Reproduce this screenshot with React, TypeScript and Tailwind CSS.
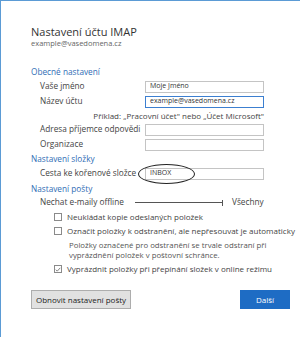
import React from "react";

const font = { fontFamily: '"Open Sans", "Noto Sans", sans-serif' };

function Field({ label, value, focused, children }: { label: string; value?: string; focused?: boolean; children?: React.ReactNode }) {
  return (
    <div className="flex items-center h-[15px] pl-[39px]">
      <span className="w-[105px] text-[8.25px] text-[#444] whitespace-nowrap">{label}</span>
      <div
        className={
          focused
            ? "relative w-[119px] h-[12px] border border-[#3c7fd0] bg-white flex items-center pl-[4px] text-[7px] text-[#333]"
            : "relative w-[119px] h-[12px] border border-[#c4c4c4] bg-white flex items-center pl-[4px] text-[7px] text-[#333]"
        }
      >
        {value}
        {children}
      </div>
    </div>
  );
}

function Check({ label, checked }: { label: string; checked?: boolean }) {
  return (
    <div className="flex items-center h-[14px] pl-[53px]">
      <div className="w-[8px] h-[8px] shrink-0 border border-[#8a8a8a] bg-white flex items-center justify-center">
        {checked && (
          <svg width="7" height="7" viewBox="0 0 8 8">
            <path d="M1 4.2 L3 6.2 L7 1.8" fill="none" stroke="#444" strokeWidth="0.9" />
          </svg>
        )}
      </div>
      <span className="ml-[5px] text-[8px] text-[#444] whitespace-nowrap">{label}</span>
    </div>
  );
}

export default function App() {
  return (
    <div style={font} className="w-[300px] h-[337px] bg-white border-l border-t border-[#5b9bd5] flex flex-col overflow-hidden">
      <div className="mt-[24px] h-[14px] pl-[30px] flex items-center text-[11px] text-[#333]">Nastavení účtu IMAP</div>
      <div className="h-[10px] pl-[30px] flex items-center text-[7.5px] text-[#666]">example@vasedomena.cz</div>

      <div className="mt-[17px] h-[12px] pl-[30px] flex items-center text-[8.25px] text-[#2f6db5]">Obecné nastavení</div>
      <div className="mt-[1px]" />
      <Field label="Vaše jméno" value="Moje Jméno" />
      <Field label="Název účtu" value="example@vasedomena.cz" focused />
      <div className="h-[13px] flex items-center justify-end pr-[36px] text-[8px] text-[#444]">
        Příklad: „Pracovní účet" nebo „Účet Microsoft"
      </div>
      <Field label="Adresa příjemce odpovědi" />
      <Field label="Organizace" />

      <div className="mt-[1px] h-[13px] pl-[30px] flex items-center text-[8.25px] text-[#2f6db5]">Nastavení složky</div>
      <Field label="Cesta ke kořenové složce" value="INBOX">
        <div className="absolute left-[-8px] top-[-5px] w-[57px] h-[20px] rounded-[50%] border border-[#222]" />
      </Field>

      <div className="mt-[1px] h-[14px] pl-[30px] flex items-center text-[8.25px] text-[#2f6db5]">Nastavení pošty</div>
      <div className="h-[13px] pl-[39px] flex items-center">
        <span className="w-[95px] text-[8.25px] text-[#444]">Nechat e-maily offline</span>
        <div className="w-[87px] h-px bg-[#555]" />
        <div className="w-px h-[6px] bg-[#555]" />
        <span className="ml-[9px] text-[8.25px] text-[#444]">Všechny</span>
      </div>
      <div className="mt-[1px]" />
      <Check label="Neukládat kopie odeslaných položek" />
      <Check label="Označit položky k odstranění, ale nepřesouvat je automaticky" />
      <div className="mt-[2px] pl-[68px] text-[7.8px] leading-[10px] text-[#555] whitespace-nowrap">
        <div>Položky označené pro odstranění se trvale odstraní při</div>
        <div>vyprázdnění položek v poštovní schránce.</div>
      </div>
      <div className="mt-[2px]" />
      <Check label="Vyprázdnit položky při přepínání složek v online režimu" checked />

      <div className="mt-[14px] flex items-center justify-between pl-[30px] pr-[10px]">
        <button className="w-[100px] h-[19px] bg-[#e1e1e1] border border-[#adadad] text-[8px] text-[#222]">
          Obnovit nastavení pošty
        </button>
        <button className="w-[50px] h-[19px] bg-[#1e6cc4] text-[8px] text-white">Další</button>
      </div>
    </div>
  );
}
